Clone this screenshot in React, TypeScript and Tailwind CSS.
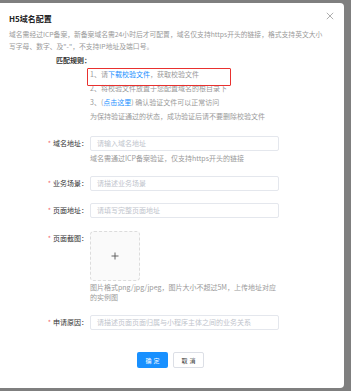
const FONT = "font-['Noto_Sans_CJK_SC','Noto_Sans',sans-serif]"

function Label({ text, top = false }: { text: string; top?: boolean }) {
  return (
    <div className={`w-[88px] shrink-0 flex justify-end text-[7px] leading-[15px] text-[#333] ${top ? 'self-start' : ''}`}>
      <span className="text-[#f56c6c] mr-[2px]">*</span>
      <span>{text}：</span>
    </div>
  )
}

function Field({ placeholder }: { placeholder: string }) {
  return (
    <div className="w-[189px] h-[15px] border border-[#e4e7ed] rounded-[2px] px-[6px] flex items-center text-[7px] text-[#c0c4cc]">
      {placeholder}
    </div>
  )
}

export default function App() {
  return (
    <div className={`w-[351px] h-[391px] bg-[#7f7f7f] pt-[3px] overflow-hidden ${FONT}`}>
      <div className="relative w-[344px] h-[385px] bg-white rounded-r-[4px] pt-[10px] pl-[9px] flex flex-col">
        {/* header */}
        <div className="flex items-center justify-between pr-[10px]">
          <h2 className="text-[8px] leading-[12px] font-bold text-[#222]">H5域名配置</h2>
          <svg width="8" height="8" viewBox="0 0 10 10" className="mt-[-6px]">
            <path d="M1 1L9 9M9 1L1 9" stroke="#9a9a9a" strokeWidth="1" />
          </svg>
        </div>
        <p className="mt-[3px] text-[6.8px] leading-[12px] text-[#9a9a9a] whitespace-nowrap">
          域名需经过ICP备案，新备案域名需24小时后才可配置，域名仅支持https开头的链接，格式支持英文大小
          <br />
          写字母、数字、及"-"，不支持IP地址及端口号。
        </p>

        {/* 匹配规则 */}
        <div className="mt-[1px] pl-[47px] text-[7px] leading-[14px] text-[#333] font-bold">匹配规则：</div>
        <div className="pl-[81px] text-[7px] leading-[14px] text-[#9a9a9a]">
          <div>1、请<span className="text-[#1890ff]">下载校验文件</span>，获取校验文件</div>
          <div>2、将校验文件放置于您配置域名的根目录下</div>
          <div>3、(<span className="text-[#1890ff]">点击这里</span>) 确认验证文件可以正常访问</div>
          <div>为保持验证通过的状态，成功验证后请不要删除校验文件</div>
        </div>
        <div className="absolute left-[87px] top-[65px] w-[144px] h-[18px] border-[1.5px] border-[#e8312f] rounded-[1px]" />

        {/* form */}
        <div className="mt-[13px] flex items-center -ml-[9px]">
          <Label text="域名地址" />
          <div className="ml-[2px]"><Field placeholder="请输入域名地址" /></div>
        </div>
        <div className="mt-[1px] pl-[81px] text-[7px] leading-[12px] text-[#9a9a9a]">域名需通过ICP备案验证，仅支持https开头的链接</div>

        <div className="mt-[12px] flex items-center -ml-[9px]">
          <Label text="业务场景" />
          <div className="ml-[2px]"><Field placeholder="请描述业务场景" /></div>
        </div>

        <div className="mt-[12px] flex items-center -ml-[9px]">
          <Label text="页面地址" />
          <div className="ml-[2px]"><Field placeholder="请填写完整页面地址" /></div>
        </div>

        <div className="mt-[13px] flex -ml-[9px]">
          <Label text="页面截图" top />
          <div className="ml-[2px] w-[50px] h-[50px] border border-dashed border-[#dcdcdc] rounded-[4px] bg-[#fafafa] flex items-center justify-center">
            <svg width="8" height="8" viewBox="0 0 8 8">
              <path d="M4 0.5V7.5M0.5 4H7.5" stroke="#555" strokeWidth="0.9" />
            </svg>
          </div>
        </div>
        <div className="mt-[1px] pl-[81px] text-[7px] leading-[10px] text-[#9a9a9a] whitespace-nowrap">
          图片格式png/jpg/jpeg，图片大小不超过5M，上传地址对应
          <br />
          的实例图
        </div>

        <div className="mt-[13px] flex items-center -ml-[9px]">
          <Label text="申请原因" />
          <div className="ml-[2px]"><Field placeholder="请描述页面页面归属与小程序主体之间的业务关系" /></div>
        </div>

        <div className="mt-[22px] flex gap-[5px] pl-[128px]">
          <button className="w-[31px] h-[16px] bg-[#1890ff] text-white text-[6px] tracking-[2px] rounded-[2px] flex items-center justify-center pl-[2px]">确定</button>
          <button className="w-[31px] h-[16px] bg-white border border-[#dcdfe6] text-[#333] text-[6px] tracking-[2px] rounded-[2px] flex items-center justify-center pl-[2px]">取消</button>
        </div>
      </div>
    </div>
  )
}
